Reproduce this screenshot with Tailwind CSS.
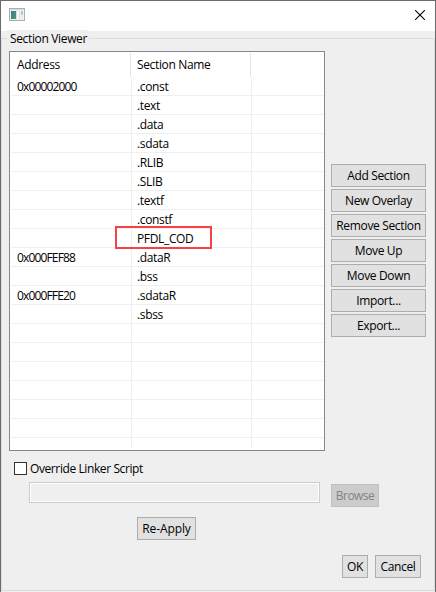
<!DOCTYPE html>
<html lang="en">
<head>
<meta charset="utf-8">
<title>Section Viewer</title>
<script src="https://cdn.jsdelivr.net/npm/@tailwindcss/browser@4"></script>
</head>
<body class="w-[436px] h-[592px] overflow-hidden text-black text-[12px] leading-[19px] tracking-[-0.35px] whitespace-nowrap font-['Open_Sans','Noto_Sans',sans-serif]">
<main class="flex flex-col w-[436px] h-[592px] border-t border-x border-[#6b6b6b] bg-[#efefef]">
  <header class="flex h-[30px] shrink-0 bg-white justify-between items-start pl-2 pr-[9px]">
    <svg class="mt-[7px]" width="16" height="14" viewBox="0 0 16 14">
      <defs><linearGradient id="g" x1="0" y1="0" x2="1" y2="1"><stop stop-color="#4a7196"/><stop offset="1" stop-color="#43a06c"/></linearGradient></defs>
      <rect x=".5" y=".5" width="15" height="12" fill="#eef0f2" stroke="#a9aeb3"/>
      <rect x="1" y="1" width="14" height="1" fill="#d5dbe1"/>
      <rect x="2" y="3" width="5" height="8" fill="url(#g)"/>
      <rect x="7" y="3" width="4" height="8" fill="#d8dcdf"/>
      <rect x="8" y="3" width="2" height="8" fill="#f6f7f8"/>
      <rect x="12" y="3" width="2" height="4" fill="#a5cfd0"/>
    </svg>
    <svg class="mt-[9px] mr-[1px]" width="10" height="10" viewBox="0 0 10 10"><path d="M0 0L10 10M10 0L0 10" stroke="#000" stroke-width="1.1"/></svg>
  </header>
  <section class="flex flex-col mt-[7px] h-[553px] shrink-0 border border-[#dcdcdc] relative">
    <h1 class="absolute left-[5px] -top-[9px] h-[18px] leading-[18px] bg-[#efefef] pl-[3px] w-[82px] tracking-[-0.35px]">Section Viewer</h1>
    <div class="flex pt-[12px] pl-[7px]">
      <div class="relative w-[316px] h-[400px] border border-[#828790] bg-white p-px">
        <div class="flex h-[24px] leading-[24px]">
          <div class="w-[120px] pl-[6px] border-r border-[#e5e5e5]">Address</div>
          <div class="w-[120px] pl-[6px] border-r border-[#e5e5e5]">Section Name</div>
        </div>
        <div id="rows" class="h-[371px] overflow-hidden"></div>
        <div class="absolute left-[105px] top-[174px] w-[97px] h-[23px] border-2 border-[#f94144]"></div>
      </div>
      <div id="side" class="flex flex-col gap-[2px] pt-[113px] pl-[6px]"></div>
    </div>
    <label class="flex items-center h-[19px] mt-[8px] pl-[12px] gap-[3px]">
      <span class="size-[13px] border border-[#333] bg-white"></span>
      <span class="tracking-[-0.4px]">Override Linker Script</span>
    </label>
    <div class="flex items-start mt-[4px] pl-[27px]">
      <div class="w-[291px] h-[21px] border border-[#ccc] p-px bg-white"><div class="h-full bg-[#efefef]"></div></div>
      <button class="ml-[11px] mt-[2px] w-[48px] h-[23px] border border-[#bfbfbf] bg-[#ccc] text-[#838383] leading-[21px] tracking-[-0.55px]">Browse</button>
    </div>
    <button class="ml-[135px] mt-[10px] w-[59px] h-[23px] shrink-0 border border-[#adadad] bg-[#e1e1e1] leading-[21px] tracking-[-0.1px]">Re-Apply</button>
    <div class="flex justify-end gap-[7px] mt-[15px] pr-[13px]">
      <button class="w-[26px] h-[23px] border border-[#adadad] bg-[#e1e1e1] leading-[21px]">OK</button>
      <button class="w-[46px] h-[23px] border border-[#adadad] bg-[#e1e1e1] leading-[21px]">Cancel</button>
    </div>
  </section>
</main>
<script>
const rows = [['0x00002000','.const'],['','.text'],['','.data'],['','.sdata'],['','.RLIB'],['','.SLIB'],['','.textf'],['','.constf'],['','PFDL_COD'],['0x000FEF88','.dataR'],['','.bss'],['0x000FFE20','.sdataR'],['','.sbss']];
while (rows.length < 20) rows.push(['','']);
document.getElementById('rows').innerHTML = rows.map(([address, name]) =>
  `<div class="flex h-[19px] border-b border-[#efefef] leading-[19px]"><div class="w-[121px] pl-[6px] border-r border-[#efefef] tracking-[-0.85px]">${address}</div><div class="w-[120px] pl-[5px] border-r border-[#efefef]">${name}</div></div>`).join('');
document.getElementById('side').innerHTML = ['Add Section','New Overlay','Remove Section','Move Up','Move Down','Import...','Export...'].map(label =>
  `<button class="w-[95px] h-[23px] border border-[#adadad] bg-[#e1e1e1] leading-[21px]">${label}</button>`).join('');
</script>
</body>
</html>
